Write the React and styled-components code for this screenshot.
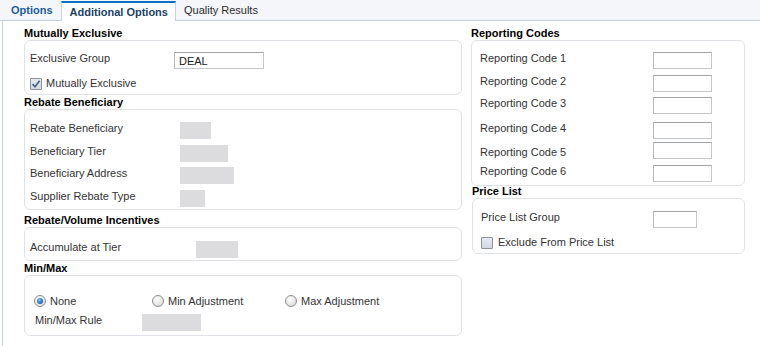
import React from "react";
import styled, { createGlobalStyle } from "styled-components";

const GlobalStyle = createGlobalStyle`
  html, body {
    margin: 0;
    padding: 0;
    background: #fff;
  }
  body {
    font-family: "Liberation Sans", Arial, sans-serif;
    font-size: 11px;
    color: #333;
  }
`;

const reportingRows = [
  { label: "Reporting Code 1", space: 0 },
  { label: "Reporting Code 2", space: 6 },
  { label: "Reporting Code 3", space: 5 },
  { label: "Reporting Code 4", space: 8 },
  { label: "Reporting Code 5", space: 3, shift: 4 },
  { label: "Reporting Code 6", space: 6 },
];

const beneficiaryRows = [
  { label: "Rebate Beneficiary", width: 31, space: 0 },
  { label: "Beneficiary Tier", width: 48, space: 6 },
  { label: "Beneficiary Address", width: 54, space: 5 },
  { label: "Supplier Rebate Type", width: 25, space: 6 },
];

const CheckBox = ({ checked }) => (
  <CheckSquare>
    {checked && (
      <svg width="10" height="10" viewBox="0 0 10 10">
        <path d="M1.6 5.2 L4 7.8 L8.6 1.8" fill="none" stroke="#46618a" strokeWidth="1.7" />
      </svg>
    )}
  </CheckSquare>
);

const App = () => {
  return (
    <Page>
      <GlobalStyle />
      <TabBar>
        <Tab $tone="link">Options</Tab>
        <Tab $active>Additional Options</Tab>
        <Tab>Quality Results</Tab>
      </TabBar>
      <Body>
        <Column $width={438}>
          <Heading>Mutually Exclusive</Heading>
          <Box $top={11} $bottom={4}>
            <Row>
              <Label $width={144}>Exclusive Group</Label>
              <TextInput $width={90}>DEAL</TextInput>
            </Row>
            <Row $space={8}>
              <CheckLabel>
                <CheckBox checked />
                Mutually Exclusive
              </CheckLabel>
            </Row>
          </Box>

          <Heading $space={1}>Rebate Beneficiary</Heading>
          <Box $top={12} $bottom={2}>
            {beneficiaryRows.map((r) => (
              <Row key={r.label} $space={r.space}>
                <Label $width={150}>{r.label}</Label>
                <ReadOnly $width={r.width} />
              </Row>
            ))}
          </Box>

          <Heading $space={4}>Rebate/Volume Incentives</Heading>
          <Box $top={13} $bottom={2}>
            <Row>
              <Label $width={166}>Accumulate at Tier</Label>
              <ReadOnly $width={42} />
            </Row>
          </Box>

          <Heading $space={1}>Min/Max</Heading>
          <Box $top={19} $bottom={4}>
            <RadioRow>
              <RadioOption $width={118}>
                <Radio $checked />
                None
              </RadioOption>
              <RadioOption $width={133}>
                <Radio />
                Min Adjustment
              </RadioOption>
              <RadioOption>
                <Radio />
                Max Adjustment
              </RadioOption>
            </RadioRow>
            <Row $space={7}>
              <Label $width={107} $indent={5}>Min/Max Rule</Label>
              <ReadOnly $width={59} />
            </Row>
          </Box>
        </Column>

        <Column $width={274}>
          <Heading>Reporting Codes</Heading>
          <Box $top={11} $bottom={3} $left={8}>
            {reportingRows.map((r) => (
              <Row key={r.label} $space={r.space}>
                <Label $width={173} $shift={r.shift}>{r.label}</Label>
                <TextInput $width={59} />
              </Row>
            ))}
          </Box>

          <Section $indent={1}>
            <Heading $space={-1}>Price List</Heading>
            <Box $top={12} $bottom={4} $left={8}>
              <Row>
                <Label $width={172}>Price List Group</Label>
                <TextInput $width={44} />
              </Row>
              <Row $space={8}>
                <CheckLabel $gap={5}>
                  <CheckBox />
                  Exclude From Price List
                </CheckLabel>
              </Row>
            </Box>
          </Section>
        </Column>
      </Body>
    </Page>
  );
};

export default App;

const Page = styled.div`
  width: 760px;
  height: 346px;
  overflow: hidden;
`;

const TabBar = styled.div`
  display: flex;
  align-items: flex-start;
  height: 20px;
  padding-left: 3px;
  background: #f4f6f9;
  border-bottom: 1px solid #c9d3de;
`;

const Tab = styled.div`
  font-size: 11px;
  white-space: nowrap;
  cursor: pointer;
  height: ${(p) => (p.$active ? 18 : 20)}px;
  line-height: ${(p) => (p.$active ? 18 : 20)}px;
  padding: ${(p) => (p.$active ? "0 7px 0 8px" : "0 8px")};
  margin-top: ${(p) => (p.$active ? 1 : 0)}px;
  font-weight: ${(p) => (p.$active || p.$tone === "link" ? "bold" : "normal")};
  color: ${(p) => (p.$active ? "#213f66" : p.$tone === "link" ? "#1b5d9e" : "#2b2b2b")};
  background: ${(p) => (p.$active ? "#fff" : "transparent")};
  border-top: ${(p) => (p.$active ? "2px solid #0b72c6" : "none")};
  border-left: ${(p) => (p.$active ? "1px solid #c9d3de" : "none")};
  border-right: ${(p) => (p.$active ? "1px solid #c9d3de" : "none")};
`;

const Body = styled.div`
  display: flex;
  gap: 9px;
  margin-left: 2px;
  padding-left: 21px;
  height: 325px;
  border-left: 1px solid #c9d3de;
`;

const Column = styled.div`
  display: flex;
  flex-direction: column;
  width: ${(p) => p.$width}px;
  padding-top: 6px;
`;

const Section = styled.div`
  display: flex;
  flex-direction: column;
  margin-left: ${(p) => p.$indent || 0}px;
`;

const Heading = styled.div`
  font-size: 11px;
  font-weight: bold;
  color: #000;
  line-height: 13px;
  margin-top: ${(p) => p.$space || 0}px;
`;

const Box = styled.div`
  display: flex;
  flex-direction: column;
  border: 1px solid #dfe3e8;
  border-radius: 6px;
  padding: ${(p) => p.$top}px 4px ${(p) => p.$bottom}px ${(p) => p.$left || 5}px;
`;

const Row = styled.div`
  display: flex;
  align-items: flex-start;
  margin-top: ${(p) => p.$space || 0}px;
`;

const Label = styled.span`
  flex-shrink: 0;
  width: ${(p) => p.$width}px;
  margin-left: ${(p) => p.$indent || 0}px;
  padding-top: ${(p) => p.$shift || 0}px;
  line-height: 13px;
  color: #333;
  white-space: nowrap;
`;

const TextInput = styled.div`
  box-sizing: border-box;
  width: ${(p) => p.$width}px;
  height: 17px;
  padding-left: 4px;
  line-height: 16px;
  color: #1a1a1a;
  background: #fff;
  border: 1px solid #c3c6ca;
  border-top-color: #a0a4a9;
  border-left-color: #b3b7bb;
`;

const ReadOnly = styled.div`
  width: ${(p) => p.$width}px;
  height: 17px;
  background: #dcdcdf;
`;

const CheckLabel = styled.label`
  display: flex;
  align-items: center;
  gap: ${(p) => p.$gap || 4}px;
  height: 13px;
  line-height: 13px;
  color: #333;
  white-space: nowrap;
`;

const CheckSquare = styled.span`
  box-sizing: border-box;
  display: flex;
  align-items: center;
  justify-content: center;
  width: 12px;
  height: 12px;
  border: 1px solid #8e9297;
  border-radius: 1px;
  background: linear-gradient(#e6ebf2, #d3d9e1);
`;

const RadioRow = styled.div`
  display: flex;
  align-items: center;
  height: 12px;
  padding-left: 4px;
`;

const RadioOption = styled.label`
  display: flex;
  align-items: center;
  gap: 4px;
  width: ${(p) => (p.$width ? `${p.$width}px` : "auto")};
  line-height: 12px;
  color: #333;
  white-space: nowrap;
`;

const Radio = styled.span`
  box-sizing: border-box;
  position: relative;
  width: 12px;
  height: 12px;
  border-radius: 50%;
  border: 1px solid #8c9095;
  background: radial-gradient(circle at 40% 35%, #ffffff 0%, #e4e4e4 60%, #cdcdcd 100%);

  &::after {
    content: "";
    display: ${(p) => (p.$checked ? "block" : "none")};
    position: absolute;
    left: 2px;
    top: 2px;
    width: 6px;
    height: 6px;
    border-radius: 50%;
    background: radial-gradient(circle at 40% 35%, #8cc4f2 0%, #2a7ccc 50%, #0d3f7a 100%);
  }
`;
